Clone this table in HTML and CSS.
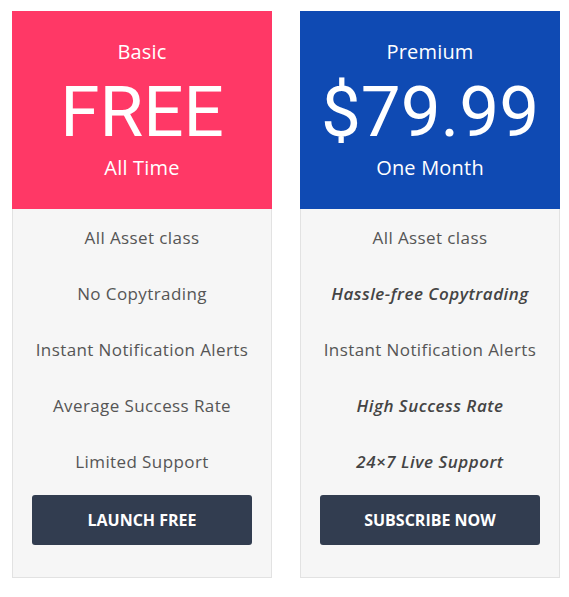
FILE: index.html
```html
<!DOCTYPE html>
<html lang="en">
<head>
  <meta charset="UTF-8" />
  <meta name="viewport" content="width=device-width, initial-scale=1.0" />
  <title>Pricing</title>
  <link rel="stylesheet" href="styles.css">
</head>
<body>
  <div class="plans">
    <!-- basic -->
    <div class="plan">
      <div class="plan-head basic">
        <div class="plan-name">Basic</div>
        <div class="plan-price">FREE</div>
        <div class="plan-term">All Time</div>
      </div>
      <div class="plan-body">
        <ul class="features">
          <li>All Asset class</li>
          <li>No Copytrading</li>
          <li>Instant Notification Alerts</li>
          <li>Average Success Rate</li>
          <li>Limited Support</li>
        </ul>
        <button class="plan-btn">Launch Free</button>
      </div>
    </div>

    <!-- premium -->
    <div class="plan">
      <div class="plan-head premium">
        <div class="plan-name">Premium</div>
        <div class="plan-price">$79.99</div>
        <div class="plan-term">One Month</div>
      </div>
      <div class="plan-body">
        <ul class="features">
          <li>All Asset class</li>
          <li class="hl">Hassle-free Copytrading</li>
          <li>Instant Notification Alerts</li>
          <li class="hl">High Success Rate</li>
          <li class="hl">24×7 Live Support</li>
        </ul>
        <button class="plan-btn">Subscribe Now</button>
      </div>
    </div>
  </div>
</body>
</html>
```

FILE: styles.css
```css
* { margin: 0; padding: 0; box-sizing: border-box; }
html, body { background: #fff; font-family: "Open Sans", "Lato", sans-serif; }

.plans {
  display: flex; gap: 28px;
  padding: 11px 0 0 12px;
}
.plan { width: 260px; }

/* header */
.plan-head {
  height: 198px;
  padding-top: 29px;
  text-align: center; color: #fff;
}
.plan-head.basic { background: #ff3866; }
.plan-head.premium { background: #0f4ab3; }
.plan-name, .plan-term { font-size: 20px; line-height: 24px; letter-spacing: 0.2px; }
.plan-price {
  font-family: Roboto, "Liberation Sans", sans-serif;
  font-size: 71px; line-height: 74px;
  margin: 11px 0 7px;
}

/* body */
.plan-body {
  background: #f6f6f6;
  border: 1px solid #e2e2e2; border-top: none;
  padding: 1px 19px 32px;
}
.features { list-style: none; }
.features li {
  height: 56px; line-height: 24px; padding: 16px 0;
  text-align: center;
  font-size: 17px; color: #555; letter-spacing: 0.4px;
  white-space: nowrap;
}
.features li.hl { font-style: italic; font-weight: 600; color: #444; letter-spacing: 0.5px; }

.plan-btn {
  display: block; width: 100%; height: 50px;
  margin-top: 5px;
  background: #323d50; color: #fff;
  border: none; border-radius: 3px;
  font-family: inherit; font-size: 16px; font-weight: 700;
  text-transform: uppercase; letter-spacing: 0;
  cursor: pointer;
}
```
